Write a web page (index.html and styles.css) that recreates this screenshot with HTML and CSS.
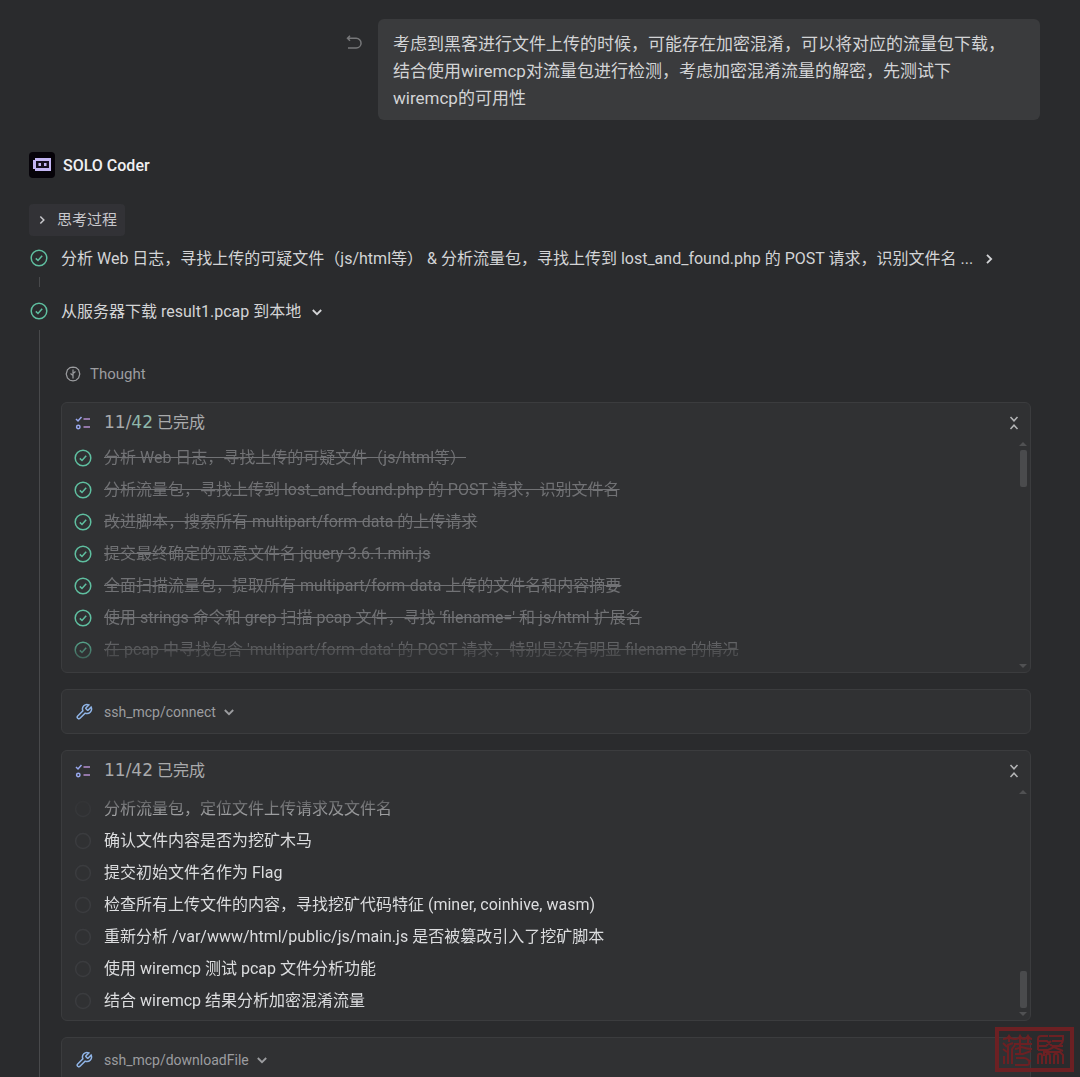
FILE: index.html
```html
<!DOCTYPE html>
<html lang="zh-CN">
<head>
<meta charset="utf-8">
<meta name="viewport" content="width=device-width, initial-scale=1">
<title>SOLO Coder</title>
<link rel="stylesheet" href="styles.css">
</head>
<body>
<svg class="sprite" aria-hidden="true">
  <symbol id="check" viewBox="0 0 18 18"><circle cx="9" cy="9" r="7.8"/><path d="M5.800 9.400l2.200 2.100 4.200-4.800"/></symbol>
  <symbol id="todo" viewBox="0 0 18 18"><circle cx="9" cy="9" r="7.4"/></symbol>
  <symbol id="down" viewBox="0 0 12 12"><path d="M1.800 4l4.200 4.200L10.200 4"/></symbol>
  <symbol id="right" viewBox="0 0 12 12"><path d="M4 1.800l4.200 4.200L4 10.200"/></symbol>
  <symbol id="fold" viewBox="0 0 12 16"><path d="M2.500 2l3.500 3.800L9.500 2M2.500 14L6 10.200 9.500 14"/></symbol>
  <symbol id="tasks" viewBox="0 0 16 16"><path class="blue" d="M1 4l2 2 3.500-4"/><circle class="blue" cx="3.300" cy="12" r="1.700"/><path class="pink" d="M8.500 4H15M8.500 12H15"/></symbol>
  <symbol id="wrench" viewBox="0 0 24 24"><path d="M14.700 6.300a1 1 0 0 0 0 1.400l1.600 1.600a1 1 0 0 0 1.400 0l3.770-3.770a6 6 0 0 1-7.940 7.940l-6.910 6.910a2.120 2.120 0 0 1-3-3l6.910-6.910a6 6 0 0 1 7.940-7.940l-3.760 3.760z"/></symbol>
</svg>

<main class="chat">
  <section class="prompt">
    <button class="icon-button undo" aria-label="撤销">
      <svg viewBox="0 0 16 16"><path d="M4 .8L1.500 3.300 4 5.800M1.500 3.300h8.700a4.800 4.800 0 0 1 0 9.700H2"/></svg>
    </button>
    <p class="bubble">考虑到黑客进行文件上传的时候，可能存在加密混淆，可以将对应的流量包下载，结合使用wiremcp对流量包进行检测，考虑加密混淆流量的解密，先测试下wiremcp的可用性</p>
  </section>

  <header class="agent">
    <svg class="avatar" viewBox="0 0 26 26"><rect width="26" height="26" rx="4" fill="#060309"/><path d="M6 6h16v13H6v-2H4V8h2z" fill="#c3b6f3"/><path d="M7 9h13v7H7z" fill="#15101f"/><path d="M9.500 11h2.500v3H9.500zM15 11h2.500v3H15z" fill="#c3b6f3"/></svg>
    <h1>SOLO Coder</h1>
  </header>

  <button class="thinking"><svg class="chevron"><use href="#right"/></svg>思考过程</button>

  <ol class="steps">
    <li class="step">
      <div class="rail"><svg class="status done"><use href="#check"/></svg></div>
      <button class="step-title"><span class="ellipsis">分析 Web 日志，寻找上传的可疑文件（js/html等） &amp; 分析流量包，寻找上传到 lost_and_found.php 的 POST 请求，识别文件名 ...</span><svg class="chevron"><use href="#right"/></svg></button>
    </li>
    <li class="step">
      <div class="rail"><svg class="status done"><use href="#check"/></svg></div>
      <div class="step-body">
        <button class="step-title"><span class="ellipsis">从服务器下载 result1.pcap 到本地</span><svg class="chevron"><use href="#down"/></svg></button>

        <div class="details">
          <div class="thought">
            <svg viewBox="0 0 16 16"><path d="M8 1.200L11 1.600 13.600 3.800 14.800 8 13.600 12 11 14.300 8 14.800 5 14.300 2.400 12 1.200 8 2.400 3.800 5 1.600zM8 3.500V12.500M5.500 7.500L8 9.500M10.500 5.500L8 7.500"/></svg>
            Thought
          </div>

          <section class="card">
            <header class="card-head">
              <svg class="tasks"><use href="#tasks"/></svg>
              <h2><span class="count">11/<span class="total">42</span></span> 已完成</h2>
              <button class="icon-button fold" aria-label="收起"><svg><use href="#fold"/></svg></button>
            </header>
            <div class="scroller">
              <ul class="todos finished fade-bottom">
                <li><svg class="status done"><use href="#check"/></svg><s>分析 Web 日志，寻找上传的可疑文件（js/html等）</s></li>
                <li><svg class="status done"><use href="#check"/></svg><s>分析流量包，寻找上传到 lost_and_found.php 的 POST 请求，识别文件名</s></li>
                <li><svg class="status done"><use href="#check"/></svg><s>改进脚本，搜索所有 multipart/form-data 的上传请求</s></li>
                <li><svg class="status done"><use href="#check"/></svg><s>提交最终确定的恶意文件名 jquery-3.6.1.min.js</s></li>
                <li><svg class="status done"><use href="#check"/></svg><s>全面扫描流量包，提取所有 multipart/form-data 上传的文件名和内容摘要</s></li>
                <li><svg class="status done"><use href="#check"/></svg><s>使用 strings 命令和 grep 扫描 pcap 文件，寻找 'filename=' 和 js/html 扩展名</s></li>
                <li><svg class="status done"><use href="#check"/></svg><s>在 pcap 中寻找包含 'multipart/form-data' 的 POST 请求，特别是没有明显 filename 的情况</s></li>
              </ul>
              <div class="scrollbar at-top"><i class="arrow up"></i><i class="thumb"></i><i class="arrow"></i></div>
            </div>
          </section>

          <button class="card tool"><svg class="wrench"><use href="#wrench"/></svg>ssh_mcp/connect<svg class="chevron"><use href="#down"/></svg></button>

          <section class="card">
            <header class="card-head">
              <svg class="tasks"><use href="#tasks"/></svg>
              <h2><span class="count">11/42</span> 已完成</h2>
              <button class="icon-button fold" aria-label="收起"><svg><use href="#fold"/></svg></button>
            </header>
            <div class="scroller">
              <ul class="todos pending fade-top">
                <li><svg class="status"><use href="#todo"/></svg>分析流量包，定位文件上传请求及文件名</li>
                <li><svg class="status"><use href="#todo"/></svg>确认文件内容是否为挖矿木马</li>
                <li><svg class="status"><use href="#todo"/></svg>提交初始文件名作为 Flag</li>
                <li><svg class="status"><use href="#todo"/></svg>检查所有上传文件的内容，寻找挖矿代码特征 (miner, coinhive, wasm)</li>
                <li><svg class="status"><use href="#todo"/></svg>重新分析 /var/www/html/public/js/main.js 是否被篡改引入了挖矿脚本</li>
                <li><svg class="status"><use href="#todo"/></svg>使用 wiremcp 测试 pcap 文件分析功能</li>
                <li><svg class="status"><use href="#todo"/></svg>结合 wiremcp 结果分析加密混淆流量</li>
              </ul>
              <div class="scrollbar at-end"><i class="arrow up"></i><i class="thumb"></i><i class="arrow"></i></div>
            </div>
          </section>

          <button class="card tool"><svg class="wrench"><use href="#wrench"/></svg>ssh_mcp/downloadFile<svg class="chevron"><use href="#down"/></svg></button>
        </div>
      </div>
    </li>
  </ol>
</main>

<svg class="seal" viewBox="0 0 79 45" aria-hidden="true">
  <rect x="2" y="2" width="75" height="41" stroke-width="4"/>
  <path stroke-width="2" d="M8 12c4 0 5-1 6-3 1 2 2 3 6 3s4-1 5-3c1 2 2 3 4 3s3-1 4-3c1 2 2 3 4 3M14 10v5M25 10v16M33 10v6M8 16l4 4M8 22l4 3M9 37v-8M13 37V18l5-2M17 37V22l3-4M19 17h18M20 22c4 0 4-2 6-2s4 2 11 2M20 27h8l8-3M21 31h8c4 0 3 3 7 3M20 38h12c3 0 3-3 1-4"/>
  <path stroke-width="2" d="M43 23V12c0-2 1-3 3-3h7M43 14h9l5 5M43 19h8l5-5M54 9h14v4c0 3-2 4-4 6M57 14h11M57 19h11M43 23h10l6-3 9 4M43 37V29c0-3 4-3 4 0v8M51 37V29c0-3 4-3 4 0v8M59 37V29c0-3 4-3 4 0v8M68 37V28l-3-3M49 29v-4h17"/>
</svg>
</body>
</html>
```
FILE: styles.css
```css
* {
  box-sizing: border-box;
  margin: 0;
  padding: 0;
}

body {
  background: #2a2b2d;
  color: #d3d4d6;
  font: 16px/24px Roboto, "Noto Sans CJK SC", sans-serif;
}

button {
  border: 0;
  background: none;
  color: inherit;
  font: inherit;
  text-align: left;
  cursor: pointer;
}

ol,
ul {
  list-style: none;
}

svg {
  display: block;
  flex: none;
  fill: none;
  stroke: currentColor;
  stroke-width: 1.5;
}

.sprite {
  position: absolute;
  width: 0;
  height: 0;
}

.chat {
  padding: 19px 40px 0 29px;
}

.prompt {
  display: flex;
  justify-content: flex-end;
  align-items: flex-start;
  gap: 16px;
}

.undo {
  padding-top: 16px;
  color: #77787a;
}

.undo svg {
  width: 16px;
  height: 16px;
}

.bubble {
  width: 662px;
  max-width: 90%;
  padding: 12px 28px 8px 15px;
  border-radius: 6px;
  background: #3a3b3d;
  font-size: 17px;
  line-height: 27px;
}

.agent {
  display: flex;
  align-items: center;
  gap: 8px;
  margin-top: 32px;
}

.avatar {
  width: 26px;
  height: 26px;
  stroke: none;
}

.agent h1 {
  padding-top: 2px;
  color: #f0f0f2;
  font-size: 16px;
  font-weight: 500;
}

.thinking {
  display: flex;
  align-items: center;
  gap: 10px;
  margin-top: 26px;
  padding: 4px 8px;
  border-radius: 4px;
  background: #323236;
  color: #c8c8cc;
  font-size: 15px;
}

.chevron {
  width: 12px;
  height: 12px;
  stroke-width: 1.8;
}

.thinking .chevron {
  width: 10px;
  height: 10px;
}

.steps {
  margin-top: 10px;
}

.step {
  display: flex;
  gap: 12px;
}

.rail {
  display: flex;
  flex: none;
  flex-direction: column;
  align-items: center;
  gap: 10px;
  width: 20px;
  padding-top: 3px;
}

.rail::after {
  flex: 1;
  width: 1px;
  background: #48494b;
  content: "";
}

.step:first-child .rail {
  padding-bottom: 12px;
}

.step:first-child {
  min-height: 53px;
}

.status {
  width: 18px;
  height: 18px;
  color: #3b3c3f;
}

.status.done {
  color: #5fbfa0;
}

.step-title {
  display: flex;
  align-items: center;
  align-self: flex-start;
  gap: 10px;
  min-width: 0;
  padding-top: 1px;
}

.ellipsis {
  overflow: hidden;
  text-overflow: ellipsis;
  white-space: nowrap;
}

.step-body {
  flex: 1;
  min-width: 0;
}

.details {
  display: flex;
  flex-direction: column;
  gap: 16px;
  margin: 38px 9px 0 0;
}

.thought {
  display: flex;
  align-items: center;
  gap: 9px;
  padding-left: 4px;
  color: #9c9da0;
  font-size: 15px;
}

.thought svg {
  width: 16px;
  height: 16px;
  stroke-width: 1.2;
}

.card {
  border: 1px solid #3b3c3e;
  border-radius: 6px;
  background: #303133;
}

.card-head {
  display: flex;
  align-items: center;
  height: 39px;
  padding: 0 10px 0 13px;
}

.card-head h2 {
  flex: 1;
  margin-left: 13px;
  color: #a9aaac;
  font-size: 16px;
  font-weight: 400;
}

.count {
  font-family: "DejaVu Sans", sans-serif;
  font-size: 17px;
}

.total {
  color: #8fb8ab;
}

.tasks {
  width: 16px;
  height: 16px;
}

.blue {
  stroke: #98a8ee;
}

.pink {
  stroke: #b48fd0;
}

.fold svg {
  width: 12px;
  height: 16px;
  color: #b4b5b7;
}

.scroller {
  display: flex;
  height: 230px;
}

.todos {
  display: flex;
  flex: 1;
  flex-direction: column;
  min-width: 0;
  overflow: hidden;
}

.todos li {
  display: flex;
  flex: none;
  align-items: center;
  gap: 12px;
  height: 32px;
  padding-left: 12px;
  white-space: nowrap;
}

.finished {
  color: #717275;
}

.pending {
  justify-content: flex-end;
  padding-bottom: 3px;
  color: #dcdddf;
}

.fade-bottom {
  mask-image: linear-gradient(to top, transparent, #000 38px);
}

.fade-top {
  mask-image: linear-gradient(to bottom, transparent, #000 38px);
}

.scrollbar {
  display: flex;
  flex: none;
  flex-direction: column;
  align-items: center;
  gap: 4px;
  width: 14px;
  padding-bottom: 4px;
}

.thumb {
  width: 7px;
  height: 37px;
  border-radius: 2px;
  background: #4a4b4d;
}

.arrow {
  border: 4px solid transparent;
  border-top-color: #505153;
  border-bottom-width: 0;
}

.arrow.up {
  border-width: 0 4px 4px;
  border-bottom-color: #505153;
}

.at-top .arrow:last-child,
.at-end .thumb {
  margin-top: auto;
}

.tool {
  display: flex;
  align-items: center;
  height: 45px;
  padding: 1px 0 0 13px;
  color: #9c9da0;
  font-size: 14px;
}

.tool .wrench {
  width: 18px;
  height: 18px;
  margin-right: 11px;
  color: #8fb4e6;
  stroke-width: 2;
}

.tool .chevron {
  margin-left: 7px;
}

/* Signature stamp pinned to the corner of the window */
.seal {
  position: fixed;
  right: 6px;
  bottom: 5px;
  width: 79px;
  height: 45px;
  color: #6c2023;
}
```
